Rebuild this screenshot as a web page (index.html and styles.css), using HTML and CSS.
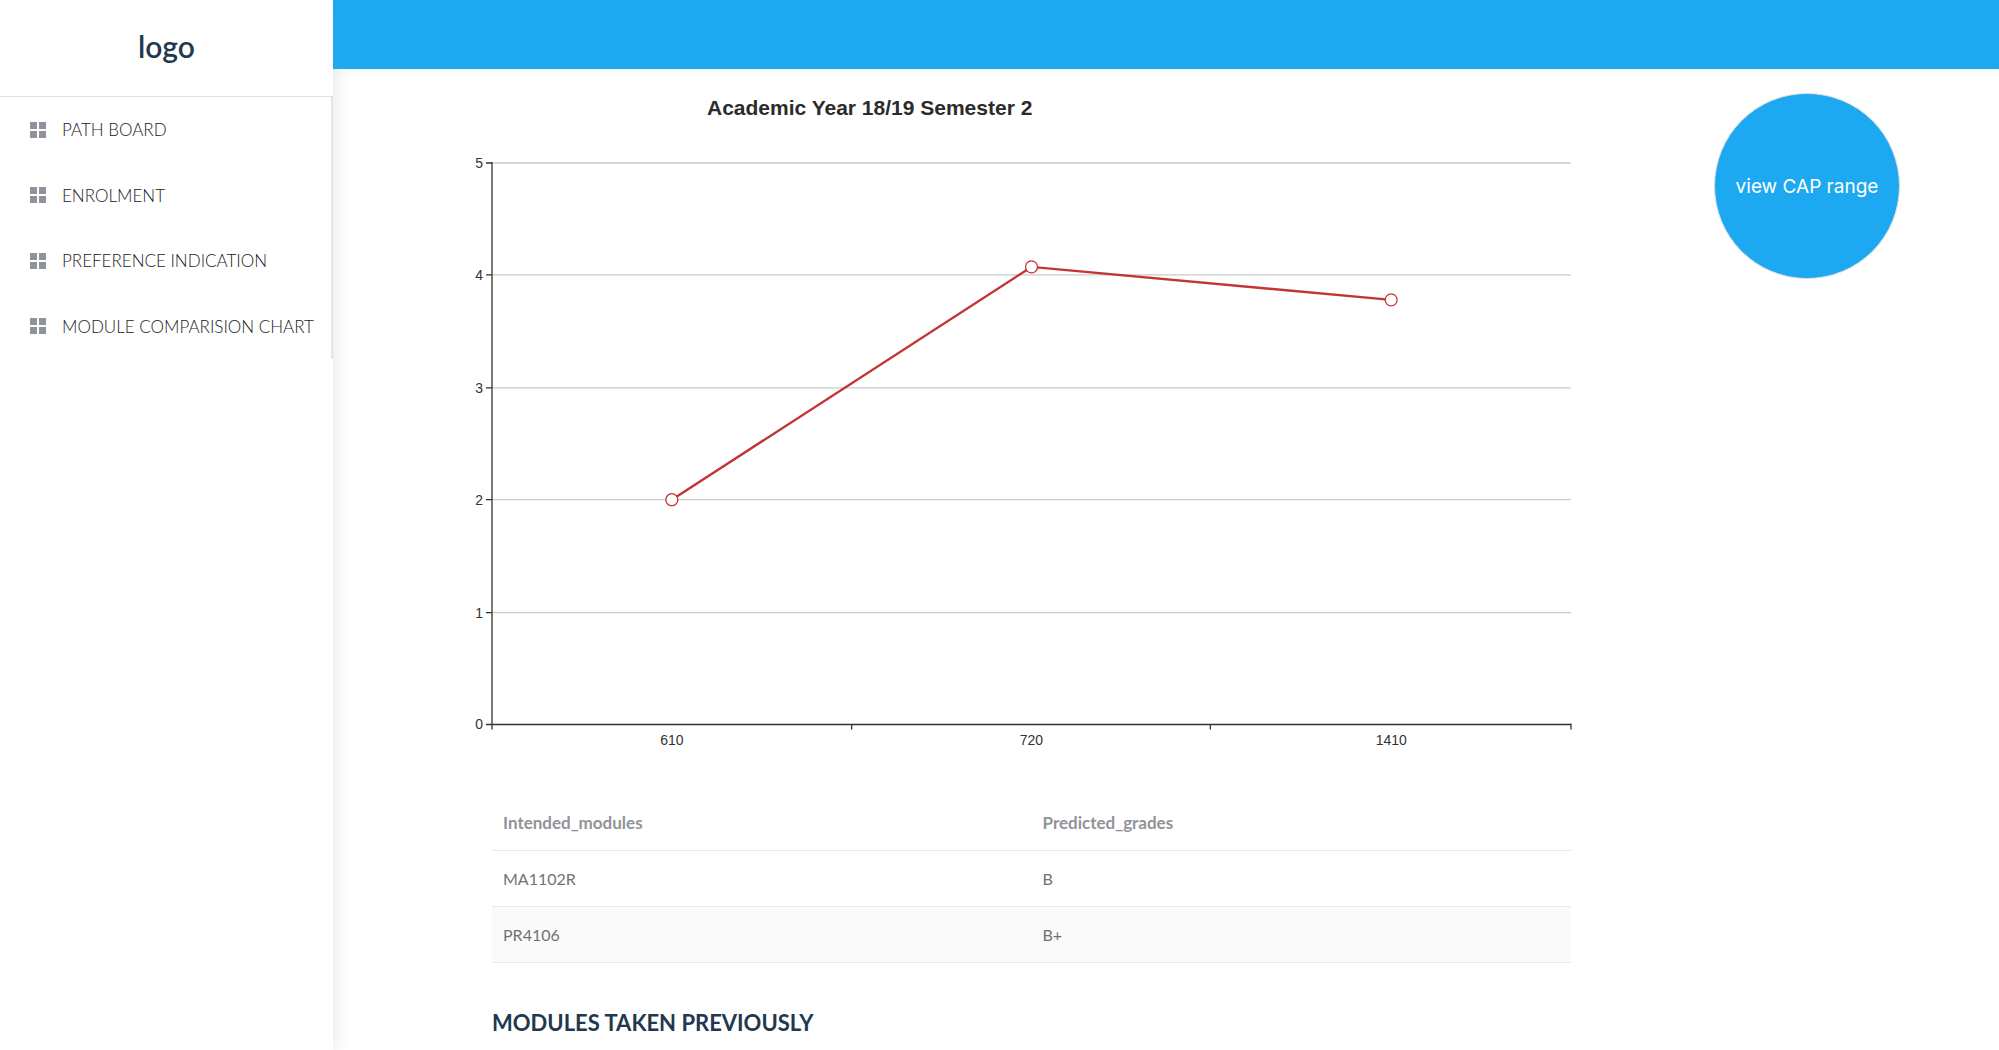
FILE: index.html
```html
<!DOCTYPE html>
<html lang="en">
<head>
<meta charset="utf-8">
<title>Module comparison chart</title>
<link rel="stylesheet" href="styles.css">
</head>
<body>
<svg class="sprite" aria-hidden="true">
  <symbol id="grid" viewBox="0 0 16 16"><path d="M0 0h7v7H0zM9 0h7v7H9zM0 9h7v7H0zM9 9h7v7H9z"/></symbol>
</svg>
<div class="app">
  <aside class="sidebar">
    <div class="logo">logo</div>
    <nav class="menu">
      <a href="#path"><svg class="icon"><use href="#grid"/></svg>PATH BOARD</a>
      <a href="#enrolment"><svg class="icon"><use href="#grid"/></svg>ENROLMENT</a>
      <a href="#preference"><svg class="icon"><use href="#grid"/></svg>PREFERENCE INDICATION</a>
      <a href="#chart"><svg class="icon"><use href="#grid"/></svg>MODULE COMPARISION CHART</a>
    </nav>
  </aside>
  <div class="page">
    <header class="topbar"></header>
    <main class="content">
      <div class="report">
        <h2 class="chart-title">Academic Year 18/19 Semester 2</h2>
        <svg class="chart" id="chart" viewBox="0 0 1080 590" role="img" aria-label="CAP by module">
          <g class="gridlines">
            <path d="M0 1H1080M0 113H1080M0 226H1080M0 338H1080M0 451H1080"/>
          </g>
          <g class="axis">
            <path d="M0 0V568M-6 1H0M-6 113H0M-6 226H0M-6 338H0M-6 451H0M-6 563H1080M360 563V568M719 563V568M1080 562V568"/>
          </g>
          <g class="value-labels">
            <text x="-9" y="6">5</text>
            <text x="-9" y="118">4</text>
            <text x="-9" y="231">3</text>
            <text x="-9" y="343">2</text>
            <text x="-9" y="456">1</text>
            <text x="-9" y="568">0</text>
          </g>
          <g class="category-labels">
            <text x="180" y="584">610</text>
            <text x="540" y="584">720</text>
            <text x="900" y="584">1410</text>
          </g>
          <g class="series">
            <polyline points="180,338 540,105 900,138"/>
            <circle cx="180" cy="338" r="6"/>
            <circle cx="540" cy="105" r="6"/>
            <circle cx="900" cy="138" r="6"/>
          </g>
        </svg>
        <table class="modules">
          <thead><tr><th>Intended_modules</th><th>Predicted_grades</th></tr></thead>
          <tbody>
            <tr><td>MA1102R</td><td>B</td></tr>
            <tr><td>PR4106</td><td>B+</td></tr>
          </tbody>
        </table>
        <h2 class="section-title">MODULES TAKEN PREVIOUSLY</h2>
      </div>
      <button class="cap-button" type="button">view CAP range</button>
    </main>
  </div>
</div>
</body>
</html>
```
FILE: styles.css
```css
* { box-sizing: border-box; }

body {
  margin: 0;
  background: #fff;
  color: #2c3e50;
  font-family: Lato, sans-serif;
}

.sprite { display: none; }

.app {
  display: flex;
  min-height: 100vh;
}

.sidebar {
  flex: 0 0 333px;
  background: #fff;
  box-shadow: 2px 0 16px rgba(0, 0, 0, 0.1);
}

.logo {
  height: 97px;
  border-bottom: 1px solid #dedfe2;
  color: #22384f;
  font-size: 30px;
  font-weight: 600;
  line-height: 92px;
  text-align: center;
}

.menu {
  display: grid;
  grid-auto-rows: 1fr;
  height: 262px;
  border-right: 2px solid #e4e4e6;
}

.menu a {
  display: flex;
  align-items: center;
  gap: 16px;
  padding-left: 30px;
  color: #202124;
  font-size: 17px;
  font-weight: 300;
  text-decoration: none;
  white-space: nowrap;
}

.icon {
  width: 16px;
  height: 16px;
  fill: #909399;
}

.page { flex: 1; min-width: 0; }

.topbar {
  height: 69px;
  background: #1da9f2;
  box-shadow: 0 2px 12px rgba(0, 0, 0, 0.04);
}

.content {
  display: grid;
  grid-template-columns: 159fr 1079fr 143fr 186px 99fr;
  align-items: start;
  padding-top: 24px;
}

.report { grid-column: 2; }

.chart-title {
  width: 70%;
  margin: 0 0 39px;
  color: #2b2b2b;
  font-family: "Liberation Sans", Arial, sans-serif;
  font-size: 21px;
  line-height: 30px;
  text-align: center;
}

.chart {
  display: block;
  width: 100%;
  overflow: visible;
  font-family: "Liberation Sans", Arial, sans-serif;
  font-size: 14px;
}

.chart text { fill: #333; }
.gridlines path { fill: none; stroke: #ccc; stroke-width: 1.3; }
.axis path { fill: none; stroke: #333; stroke-width: 1.3; }
.value-labels { text-anchor: end; }
.category-labels { text-anchor: middle; }
.series polyline { fill: none; stroke: #c23531; stroke-width: 2.4; }
.series circle { fill: #fff; stroke: #c23531; stroke-width: 1.3; }

.modules {
  width: 100%;
  margin-top: 43px;
  border-collapse: collapse;
  table-layout: fixed;
  font-size: 16px;
}

.modules th,
.modules td {
  height: 56px;
  padding: 0 11px;
  border-bottom: 1px solid #e4e8ef;
  color: #707275;
  text-align: left;
}

.modules th { color: #909399; font-size: 17px; }
.modules tbody tr:nth-child(even) { background: #fafafa; }

.section-title {
  margin: 44px 0 0;
  color: #22384f;
  font-size: 22px;
  font-weight: 700;
  line-height: 32px;
}

.cap-button {
  grid-column: 4;
  width: 186px;
  height: 186px;
  border: 1px solid #dcdfe6;
  border-radius: 50%;
  padding: 0;
  background: #1da9f2;
  color: #fff;
  font-family: Inter, sans-serif;
  font-size: 19px;
}
```
